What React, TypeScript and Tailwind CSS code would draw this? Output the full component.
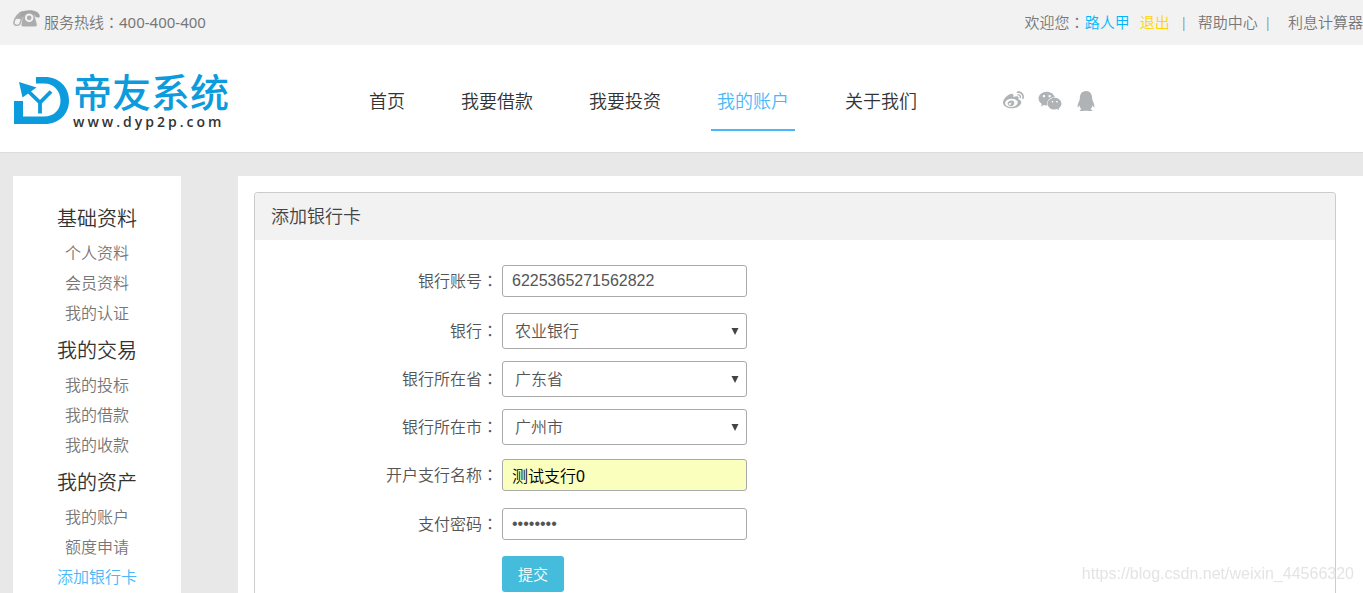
import React from 'react';
import { FaQq, FaWeibo, FaWeixin } from 'react-icons/fa';

const NAV_ITEMS = ['首页', '我要借款', '我要投资', '我的账户', '关于我们'];

const SIDEBAR_GROUPS = [
  { title: '基础资料', items: ['个人资料', '会员资料', '我的认证'] },
  { title: '我的交易', items: ['我的投标', '我的借款', '我的收款'] },
  { title: '我的资产', items: ['我的账户', '额度申请', '添加银行卡'] },
];

const SOCIAL_LINKS = [
  { label: '微博', icon: FaWeibo, size: 'h-[21px] w-[21px]' },
  { label: '微信', icon: FaWeixin, size: 'h-6 w-6' },
  { label: 'QQ', icon: FaQq, size: 'h-5 w-5' },
];

const INPUT_CLASS =
  'h-8 w-[245px] rounded-[3px] border border-[#aaa] px-[9px] text-base outline-none';

// Full-width colon, centred in its box
function Colon() {
  return <span className="font-['Noto_Sans_CJK_TC',sans-serif]">：</span>;
}

function PhoneIcon() {
  return (
    <svg viewBox="0 0 27 17" className="h-[17px] w-[27px]" aria-hidden="true">
      <path
        fill="none"
        stroke="#adadad"
        strokeWidth="1.4"
        d="M10 1.500C5.500 2.500 1.500 8 .9 12.500C.8 15.800 4.500 16 6.500 14.500C7.500 12.500 8 9.500 9.500 7"
      />
      <path fill="#adadad" d="M2 9.500C4 5 7 2.500 10 1.500L11 6C9.500 7 8.500 8 8 9.500C6 8.500 4 8.500 2 9.500Z" />
      <path
        fill="#a5a5a5"
        d="M8 2.500C12-.3 20-.5 24 2C26.500 3.500 27.200 5.500 26.500 7.200C25 7.800 23.500 7.600 22.500 6.800L21 4.500H13L10.500 7L7.500 6Z"
      />
      <path fill="#adadad" d="M12.500 4H21L23.900 14.500Q24.200 16.600 22 16.600H10.500Q8.200 16.600 8.500 14L9.500 8.500Z" />
      <circle cx="16.2" cy="7.8" r="3.3" fill="#adadad" stroke="#f2f2f2" strokeWidth="1.9" />
    </svg>
  );
}

function Logo() {
  return (
    <a href="#" className="flex items-start" aria-label="帝友系统">
      <svg viewBox="0 0 56 48" className="mt-2 h-12 w-14" aria-hidden="true">
        <path
          fill="#0c9bdc"
          d="M22 0H31C45 0 55 10 55 23.500S45 47 31 47H0V24H9V39.500H30C40 39.500 46.500 33 46.500 23.500S40 6.500 30 6.500H22Z"
        />
        <path fill="#0c9bdc" d="M5 5L22.500 10.500L8.500 20.500Z" />
        <path
          fill="none"
          stroke="#0c9bdc"
          strokeWidth="3.8"
          d="M12 12L26 25.500L37 14.500M26 24.500V36.500"
        />
      </svg>
      <span className="flex flex-col gap-1 pl-[3px]">
        <span className="font-['Noto_Sans_CJK_SC',sans-serif] text-[39px] leading-[42px] font-medium text-[#0c9bdc]">
          帝友系统
        </span>
        <span className="font-['Open_Sans',sans-serif] text-sm leading-[14px] font-semibold tracking-[3px] text-[#333]">
          www.dyp2p.com
        </span>
      </span>
    </a>
  );
}

function TopBar() {
  return (
    <div className="flex h-[45px] items-center justify-between overflow-hidden bg-[#f2f2f2] pl-[13px] text-[15px] whitespace-nowrap text-[#777]">
      <div className="flex items-center gap-1">
        <span className="-mt-2">
          <PhoneIcon />
        </span>
        <span>
          服务热线
          <Colon />
          <span className="font-normal">400-400-400</span>
        </span>
      </div>
      <div className="flex items-center">
        <span>
          欢迎您
          <Colon />
        </span>
        <a href="#" className="text-[#00b7ff]">路人甲</a>
        <a href="#" className="ml-2.5 text-[#ffd400]">退出</a>
        <span className="ml-2.5">|</span>
        <a href="#" className="ml-2.5">帮助中心</a>
        <span className="ml-1.5">|</span>
        <a href="#" className="ml-4">利息计算器</a>
      </div>
    </div>
  );
}

function Header() {
  return (
    <header className="flex h-[108px] items-center border-b border-[#ddd] bg-white pl-[14px]">
      <Logo />
      <nav className="ml-[134px] flex gap-11 text-lg whitespace-nowrap text-[#333]">
        {NAV_ITEMS.map((item) => (
          <a
            key={item}
            href="#"
            className={`mt-1 flex h-[60px] items-center border-b-2 px-1.5 pt-0.5 ${
              item === '我的账户' ? 'border-[#49b8f9] text-[#49b8f9]' : 'border-transparent'
            }`}
          >
            {item}
          </a>
        ))}
      </nav>
      <div className="mt-1 ml-20 flex items-center gap-[14px] text-[#afb3b6]">
        {SOCIAL_LINKS.map(({ label, icon: Icon, size }) => (
          <a key={label} href="#" aria-label={label}>
            <Icon className={size} />
          </a>
        ))}
      </div>
    </header>
  );
}

function Sidebar() {
  return (
    <aside className="w-[168px] shrink-0 bg-white pt-5 text-center">
      {SIDEBAR_GROUPS.map((group) => (
        <section key={group.title}>
          <h2 className="pt-1 text-xl leading-[38px] text-[#333]">{group.title}</h2>
          <ul>
            {group.items.map((item) => (
              <li key={item} className="leading-[30px]">
                <a href="#" className={item === '添加银行卡' ? 'text-[#49b8f9]' : 'text-[#777]'}>
                  {item}
                </a>
              </li>
            ))}
          </ul>
        </section>
      ))}
    </aside>
  );
}

interface FieldRowProps {
  id: string;
  label: string;
  tall?: boolean;
  children: React.ReactNode;
}

function FieldRow({ id, label, tall, children }: FieldRowProps) {
  return (
    <div className={`flex items-center gap-1 ${tall ? 'h-[50px]' : 'h-12'}`}>
      <label htmlFor={id} className="w-[243px] shrink-0 pb-0.5 text-right">
        {label}
        <Colon />
      </label>
      {children}
    </div>
  );
}

function SelectBox({ id, value }: { id: string; value: string }) {
  return (
    <div className="relative w-[245px]">
      <select
        id={id}
        defaultValue={value}
        className="h-9 w-full appearance-none rounded-[3px] border border-[#aaa] bg-white px-3 text-base outline-none"
      >
        <option value={value}>{value}</option>
      </select>
      <svg
        viewBox="0 0 8 7"
        className="pointer-events-none absolute top-[15px] right-2 h-[7px] w-2"
        aria-hidden="true"
      >
        <path d="M0.500 0H7.500L4 7Z" fill="#444" />
      </svg>
    </div>
  );
}

function BankCardForm() {
  return (
    <form className="pt-4 pb-4 text-[#555]" onSubmit={(e) => e.preventDefault()}>
      <FieldRow id="account" label="银行账号" tall>
        <input
          id="account"
          type="text"
          defaultValue="6225365271562822"
          className={`${INPUT_CLASS} bg-white font-['Liberation_Sans',sans-serif]`}
        />
      </FieldRow>
      <div className="pt-px">
        <FieldRow id="bank" label="银行">
          <SelectBox id="bank" value="农业银行" />
        </FieldRow>
        <FieldRow id="province" label="银行所在省">
          <SelectBox id="province" value="广东省" />
        </FieldRow>
        <FieldRow id="city" label="银行所在市">
          <SelectBox id="city" value="广州市" />
        </FieldRow>
      </div>
      <FieldRow id="branch" label="开户支行名称">
        <input
          id="branch"
          type="text"
          defaultValue="测试支行0"
          className={`${INPUT_CLASS} bg-[#faffbd] font-['Liberation_Sans','Noto_Sans_CJK_SC',sans-serif] text-black`}
        />
      </FieldRow>
      <FieldRow id="password" label="支付密码" tall>
        <input
          id="password"
          type="password"
          defaultValue="12345678"
          className={`${INPUT_CLASS} bg-white font-['Liberation_Sans',sans-serif]`}
        />
      </FieldRow>
      <div className="flex h-[50px] items-center pl-[247px]">
        <button type="submit" className="h-9 rounded-[3px] bg-[#45bcdc] px-4 text-[15px] text-white">
          提交
        </button>
      </div>
    </form>
  );
}

export default function App() {
  return (
    <div className="flex min-h-screen flex-col bg-[#e8e8e8] font-['Noto_Sans','Noto_Sans_CJK_SC',sans-serif] font-[350]">
      <TopBar />
      <Header />
      <div className="flex flex-1 pt-[23px] pl-[13px]">
        <Sidebar />
        <main className="ml-[57px] flex flex-1 bg-white pt-4 pr-[27px] pl-4">
          <div className="flex-1 overflow-hidden rounded-t border border-b-0 border-[#ccc]">
            <h1 className="h-[47px] bg-[#f2f2f2] px-4 text-lg leading-[47px] text-[#444]">添加银行卡</h1>
            <BankCardForm />
          </div>
        </main>
      </div>
      <p className="pointer-events-none fixed right-[9px] bottom-[7px] font-['Liberation_Sans',sans-serif] text-base text-[#e4e4e4]">
        https://blog.csdn.net/weixin_44566320
      </p>
    </div>
  );
}
